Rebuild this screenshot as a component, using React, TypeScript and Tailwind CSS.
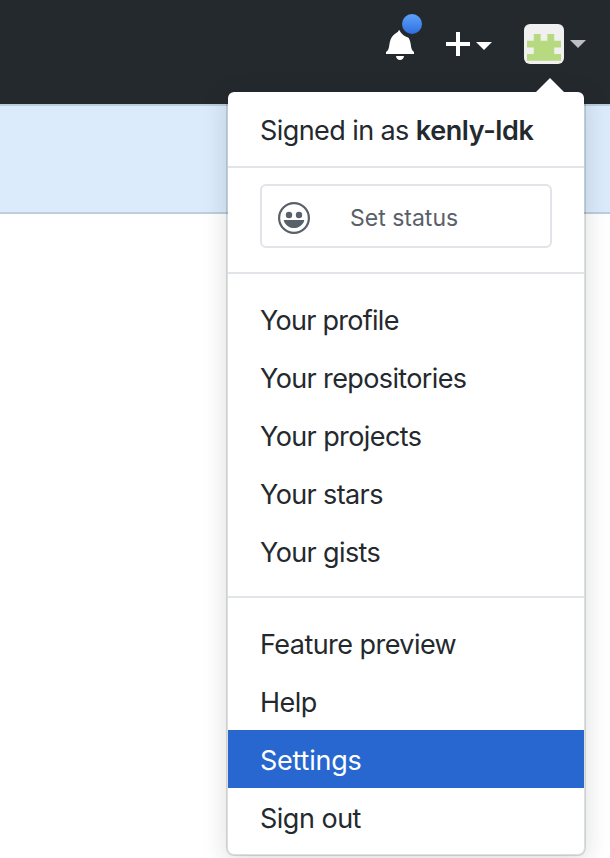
type MenuEntry = { label: string; spacing: string; active?: boolean };

const accountLinks: MenuEntry[] = [
  { label: 'Your profile', spacing: 'tracking-[-0.73px]' },
  { label: 'Your repositories', spacing: 'tracking-[-0.62px]' },
  { label: 'Your projects', spacing: 'tracking-[-0.6px]' },
  { label: 'Your stars', spacing: 'tracking-[-0.62px]' },
  { label: 'Your gists', spacing: 'tracking-[-0.62px]' },
];

const siteLinks: MenuEntry[] = [
  { label: 'Feature preview', spacing: 'tracking-[-0.55px]' },
  { label: 'Help', spacing: 'tracking-[-0.5px]' },
  { label: 'Settings', spacing: 'tracking-[-0.22px]', active: true },
  { label: 'Sign out', spacing: 'tracking-[-0.5px]' },
];

function Caret({ className }: { className: string }) {
  return (
    <svg className={className} width="16" height="8" viewBox="0 0 16 8" fill="currentColor">
      <path d="M0 0h16L8 8z" />
    </svg>
  );
}

function Bell() {
  return (
    <div className="relative h-8 w-7">
      <svg width="28" height="32" viewBox="0 0 14 16" fill="#fff">
        <path d="M14 12v1H0v-1l.73-.58c.77-.77.81-2.55 1.19-4.42C2.69 3.23 6 2 6 2c0-.55.45-1 1-1s1 .45 1 1c0 0 3.39 1.23 4.16 5 .38 1.88.42 3.66 1.19 4.42l.66.58H14zm-7 4c1.11 0 2-.89 2-2H5c0 1.11.89 2 2 2z" />
      </svg>
      <span className="absolute -top-[18px] left-3 flex size-7 rounded-full bg-[#24292e] p-1">
        <span className="size-5 rounded-full bg-linear-to-b from-[#5fa2f8] to-[#2e6fe0]" />
      </span>
    </div>
  );
}

function Avatar() {
  return (
    <svg className="rounded-md" width="40" height="40" viewBox="0 0 40 40">
      <path fill="#f0f0f0" d="M0 0h40v40H0z" />
      <path
        fill="#b7d97f"
        d="M9.8 10h6.8v6.7h6.8V10h6.8v6.7H37v6.7h-6.8V30H37v6.8H3V30h6.8v-6.6H3v-6.7h6.8z"
      />
    </svg>
  );
}

function Smiley() {
  return (
    <svg width="32" height="32" viewBox="0 0 32 32" fill="#586069">
      <circle cx="16" cy="16" r="14.9" fill="none" stroke="#586069" strokeWidth="2.2" />
      <circle cx="11" cy="13" r="3.2" />
      <circle cx="21" cy="13" r="3.2" />
      <path d="M6.2 18h19.6c.5 0 .5.4.3.9C24.400 23.500 20.300 26 16 26S7.600 23.500 5.900 18.900c-.2-.5-.2-.9.3-.9z" />
    </svg>
  );
}

function MenuRow({ label, spacing, active }: MenuEntry) {
  return (
    <a
      className={`flex h-[58px] items-center px-8 pt-1 ${active ? 'bg-[#2767cf] text-white' : 'text-[#24292e]'}`}
    >
      <span className={spacing}>{label}</span>
    </a>
  );
}

export default function App() {
  return (
    <div className="relative h-[858px] w-[610px] overflow-hidden bg-white font-['Inter','Liberation_Sans',sans-serif] text-[27px] leading-[42px] text-[#24292e]">
      <header className="flex h-[104px] items-start justify-end bg-[#24292e] pt-6 pr-6 text-white">
        <div className="mt-1 mr-8">
          <Bell />
        </div>
        <div className="mt-2 mr-8 flex items-start">
          <svg width="24" height="24" viewBox="0 0 12 12" fill="currentColor">
            <path d="M12 7H7v5H5V7H0V5h5V0h2v5h5z" />
          </svg>
          <Caret className="mt-[10px] ml-[6px]" />
        </div>
        <Avatar />
        <Caret className="mt-4 ml-[6px] text-[#bdbfc0]" />
      </header>
      <div className="h-[110px] border-y-2 border-[#bdcddd] bg-[#dbebfb]" />

      <div className="absolute top-[90px] left-[226px] w-[360px] rounded-lg border-2 border-[#1b1f23]/15 bg-white bg-clip-padding shadow-[0_6px_24px_rgba(27,31,35,0.15)]">
        <svg
          className="absolute -top-[14px] right-5"
          width="28"
          height="15"
          viewBox="0 0 28 15"
          fill="#fff"
        >
          <path d="M14 0l14 14v1H0v-1z" />
        </svg>
        <div className="flex h-[76px] items-center border-b-2 border-[#e1e4e8] px-8 pt-1 whitespace-pre">
          <span className="tracking-[-0.58px]">Signed in as </span>
          <strong className="font-semibold tracking-[-0.4px]">kenly-ldk</strong>
        </div>
        <div className="h-[106px] border-b-2 border-[#e1e4e8] px-8 pt-4">
          <div className="flex h-16 items-center rounded-md border-2 border-[#e1e4e8] pt-1 pl-4 text-[23px] text-[#586069]">
            <Smiley />
            <span className="ml-10">Set status</span>
          </div>
        </div>
        <nav className="border-b-2 border-[#e1e4e8] py-4">
          {accountLinks.map((entry) => (
            <MenuRow key={entry.label} {...entry} />
          ))}
        </nav>
        <nav className="pt-4 pb-2">
          {siteLinks.map((entry) => (
            <MenuRow key={entry.label} {...entry} />
          ))}
        </nav>
      </div>
    </div>
  );
}
